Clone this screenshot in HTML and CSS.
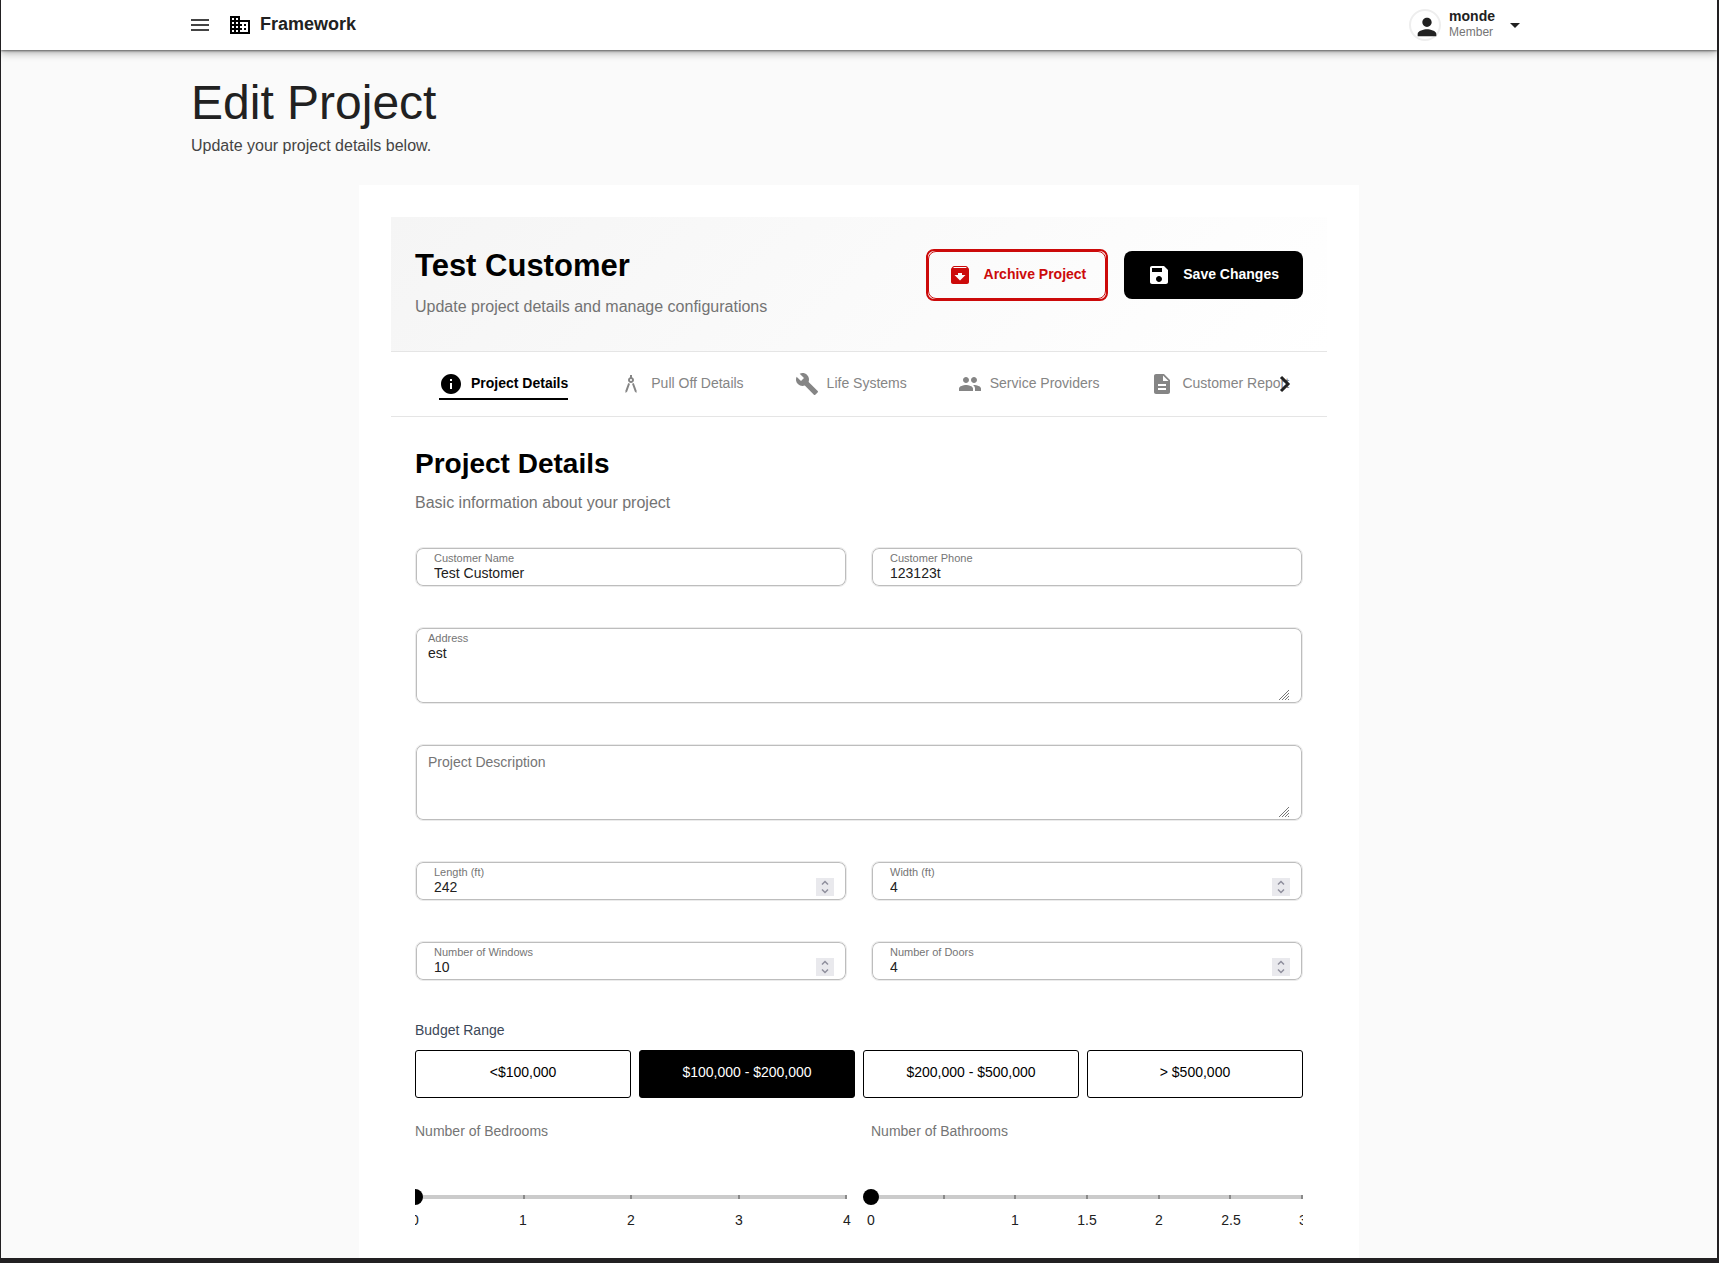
FILE: index.html
```html
<!DOCTYPE html>
<html lang="en">
<head>
  <meta charset="utf-8">
  <meta name="viewport" content="width=device-width, initial-scale=1">
  <title>Edit Project - Framework</title>
  <link rel="stylesheet" href="styles.css">
</head>
<body>
  <header class="topbar">
    <div class="topbar-inner">
      <button class="icon-button menu-button" type="button" aria-label="Menu">
        <svg class="icon" viewBox="0 0 24 24"><path d="M3 18h18v-2H3v2zm0-5h18v-2H3v2zm0-7v2h18V6H3z"/></svg>
      </button>
      <a class="brand" href="#">
        <svg class="icon brand-icon" viewBox="0 0 24 24"><path d="M12 7V3H2v18h20V7H12zM6 19H4v-2h2v2zm0-4H4v-2h2v2zm0-4H4V9h2v2zm0-4H4V5h2v2zm4 12H8v-2h2v2zm0-4H8v-2h2v2zm0-4H8V9h2v2zm0-4H8V5h2v2zm10 12h-8v-2h2v-2h-2v-2h2v-2h-2V9h8v10zm-2-8h-2v2h2v-2zm0 4h-2v2h2v-2z"/></svg>
        <span class="icon-label">Framework</span>
      </a>
      <button class="account" type="button">
        <span class="avatar">
          <svg class="avatar-icon" viewBox="0 0 24 24"><path d="M12 12c2.21 0 4-1.79 4-4s-1.79-4-4-4-4 1.79-4 4 1.79 4 4 4zm0 2c-2.67 0-8 1.34-8 4v2h16v-2c0-2.66-5.33-4-8-4z"/></svg>
        </span>
        <span class="account-text">
          <span class="account-name">monde</span>
          <span class="account-role">Member</span>
        </span>
        <svg class="icon" viewBox="0 0 24 24"><path d="M7 10l5 5 5-5z"/></svg>
      </button>
    </div>
  </header>

  <main class="page">
    <h1 class="page-title">Edit Project</h1>
    <p class="page-subtitle">Update your project details below.</p>

    <div class="card">
      <div class="project-header">
        <div>
          <h2 class="project-name">Test Customer</h2>
          <p class="project-note">Update project details and manage configurations</p>
        </div>
        <div class="actions">
          <button class="button button-archive" type="button">
            <svg class="icon" viewBox="0 0 24 24"><path d="M20.54 5.23l-1.39-1.68C18.88 3.21 18.47 3 18 3H6c-.47 0-.88.21-1.16.55L3.46 5.23C3.17 5.57 3 6.02 3 6.5V19c0 1.1.9 2 2 2h14c1.1 0 2-.9 2-2V6.5c0-.48-.17-.93-.46-1.27zM12 17.5L6.5 12H10v-2h4v2h3.5L12 17.5zM5.12 5l.81-1h12l.94 1H5.12z"/></svg>
            <span class="icon-label">Archive Project</span>
          </button>
          <button class="button button-save" type="button">
            <svg class="icon" viewBox="0 0 24 24"><path d="M17 3H5c-1.11 0-2 .9-2 2v14c0 1.1.89 2 2 2h14c1.1 0 2-.9 2-2V7l-4-4zm-5 16c-1.66 0-3-1.34-3-3s1.34-3 3-3 3 1.34 3 3-1.34 3-3 3zm3-10H5V5h10v4z"/></svg>
            <span class="icon-label">Save Changes</span>
          </button>
        </div>
      </div>

      <nav class="tabs" aria-label="Project sections">
        <div class="tab-list" role="tablist">
          <button class="tab tab-active" type="button" role="tab" aria-selected="true">
            <svg class="icon" viewBox="0 0 24 24"><path d="M12 2C6.48 2 2 6.48 2 12s4.48 10 10 10 10-4.48 10-10S17.52 2 12 2zm1 15h-2v-6h2v6zm0-8h-2V7h2v2z"/></svg>
            <span class="icon-label">Project Details</span>
          </button>
          <button class="tab" type="button" role="tab" aria-selected="false">
            <svg class="icon" viewBox="0 0 24 24"><path d="M6.36 18.78 6.61 21l1.62-1.54 2.77-7.6c-.68-.17-1.28-.51-1.77-.98l-2.87 7.9zM14.77 10.88c-.49.47-1.1.81-1.77.98l2.77 7.6L17.39 21l.26-2.22-2.88-7.9zM15 8c0-1.3-.84-2.4-2-2.82V3h-2v2.18C9.84 5.6 9 6.7 9 8c0 1.66 1.34 3 3 3s3-1.34 3-3zm-3 1c-.55 0-1-.45-1-1s.45-1 1-1 1 .45 1 1-.45 1-1 1z"/></svg>
            <span class="icon-label">Pull Off Details</span>
          </button>
          <button class="tab" type="button" role="tab" aria-selected="false">
            <svg class="icon" viewBox="0 0 24 24"><path d="M22.7 19l-9.1-9.1c.9-2.3.4-5-1.5-6.9-2-2-5-2.4-7.4-1.3L9 6 6 9 1.6 4.7C.4 7.1.9 10.1 2.9 12.1c1.9 1.9 4.6 2.4 6.9 1.5l9.1 9.1c.4.4 1 .4 1.4 0l2.3-2.3c.5-.4.5-1.1.1-1.4z"/></svg>
            <span class="icon-label">Life Systems</span>
          </button>
          <button class="tab" type="button" role="tab" aria-selected="false">
            <svg class="icon" viewBox="0 0 24 24"><path d="M16 11c1.66 0 2.99-1.34 2.99-3S17.66 5 16 5c-1.66 0-3 1.34-3 3s1.34 3 3 3zm-8 0c1.66 0 2.99-1.34 2.99-3S9.66 5 8 5C6.34 5 5 6.34 5 8s1.34 3 3 3zm0 2c-2.33 0-7 1.17-7 3.5V19h14v-2.5c0-2.33-4.67-3.5-7-3.5zm8 0c-.29 0-.62.02-.97.05 1.16.84 1.97 1.97 1.97 3.45V19h6v-2.5c0-2.33-4.67-3.5-7-3.5z"/></svg>
            <span class="icon-label">Service Providers</span>
          </button>
          <button class="tab" type="button" role="tab" aria-selected="false">
            <svg class="icon" viewBox="0 0 24 24"><path d="M14 2H6c-1.1 0-1.99.9-1.99 2L4 20c0 1.1.89 2 1.99 2H18c1.1 0 2-.9 2-2V8l-6-6zm2 16H8v-2h8v2zm0-4H8v-2h8v2zm-3-5V3.5L18.5 9H13z"/></svg>
            <span class="icon-label">Customer Report</span>
          </button>
        </div>
        <button class="tabs-next" type="button" aria-label="More tabs">
          <svg width="12" height="18" viewBox="0 0 12 18"><path d="M2 2l7 7-7 7" fill="none" stroke="#212121" stroke-width="3"/></svg>
        </button>
      </nav>

      <form class="details">
        <h2 class="section-title">Project Details</h2>
        <p class="section-note">Basic information about your project</p>

        <div class="fields">
          <div class="field">
            <label for="customer-name">Customer Name</label>
            <input id="customer-name" type="text" value="Test Customer">
          </div>
          <div class="field">
            <label for="customer-phone">Customer Phone</label>
            <input id="customer-phone" type="text" value="123123t">
          </div>
          <div class="field field-area">
            <label for="address">Address</label>
            <textarea id="address" rows="3">est</textarea>
            <svg class="grip" viewBox="0 0 10 10"><path d="M0 10L10 0M3 10L10 3M6 10L10 6M9 10L10 9"/></svg>
          </div>
          <div class="field field-area field-empty">
            <label for="description">Project Description</label>
            <textarea id="description" rows="2"></textarea>
            <svg class="grip" viewBox="0 0 10 10"><path d="M0 10L10 0M3 10L10 3M6 10L10 6M9 10L10 9"/></svg>
          </div>
          <div class="field">
            <label for="length">Length (ft)</label>
            <div class="number">
              <input id="length" type="number" value="242">
              <svg class="spinner" viewBox="0 0 18 18"><path d="M6 6.5l3-3 3 3M6 11.5l3 3 3-3"/></svg>
            </div>
          </div>
          <div class="field">
            <label for="width">Width (ft)</label>
            <div class="number">
              <input id="width" type="number" value="4">
              <svg class="spinner" viewBox="0 0 18 18"><path d="M6 6.5l3-3 3 3M6 11.5l3 3 3-3"/></svg>
            </div>
          </div>
          <div class="field">
            <label for="windows">Number of Windows</label>
            <div class="number">
              <input id="windows" type="number" value="10">
              <svg class="spinner" viewBox="0 0 18 18"><path d="M6 6.5l3-3 3 3M6 11.5l3 3 3-3"/></svg>
            </div>
          </div>
          <div class="field">
            <label for="doors">Number of Doors</label>
            <div class="number">
              <input id="doors" type="number" value="4">
              <svg class="spinner" viewBox="0 0 18 18"><path d="M6 6.5l3-3 3 3M6 11.5l3 3 3-3"/></svg>
            </div>
          </div>
        </div>

        <div class="budget-label" id="budget-label">Budget Range</div>
        <div class="budget" role="group" aria-labelledby="budget-label">
          <button class="budget-option" type="button">&lt;$100,000</button>
          <button class="budget-option budget-selected" type="button" aria-pressed="true">$100,000 - $200,000</button>
          <button class="budget-option" type="button">$200,000 - $500,000</button>
          <button class="budget-option" type="button">&gt; $500,000</button>
        </div>

        <div class="sliders">
          <div class="slider">
            <label for="bedrooms">Number of Bedrooms</label>
            <div class="slider-rail">
              <div class="ticks"><i></i><i></i><i></i><i></i><i></i></div>
              <input id="bedrooms" type="range" min="0" max="4" step="1" value="0">
            </div>
            <div class="marks"><span>0</span><span>1</span><span>2</span><span>3</span><span>4</span></div>
          </div>
          <div class="slider">
            <label for="bathrooms">Number of Bathrooms</label>
            <div class="slider-rail">
              <div class="ticks"><i></i><i></i><i></i><i></i><i></i><i></i><i></i></div>
              <input id="bathrooms" type="range" min="0" max="3" step="0.5" value="0">
            </div>
            <div class="marks"><span>0</span><span></span><span>1</span><span>1.5</span><span>2</span><span>2.5</span><span>3</span></div>
          </div>
        </div>
      </form>
    </div>
  </main>
</body>
</html>
```
FILE: styles.css
```css
* {
  box-sizing: border-box;
}

body {
  display: flex;
  flex-direction: column;
  min-height: 100vh;
  margin: 0;
  border: solid #222022;
  border-width: 0 2px 5px 1px;
  background: #fafafa;
  color: #212121;
  font: 14px/18px "Liberation Sans", Arial, Helvetica, sans-serif;
}

h1, h2, p {
  margin: 0;
}

button, input, textarea {
  margin: 0;
  padding: 0;
  border: 0;
  background: none;
  color: inherit;
  font: inherit;
}

button {
  cursor: pointer;
}

svg {
  display: block;
  flex: none;
}

.icon {
  width: 24px;
  height: 24px;
  fill: currentColor;
}

/* Text beside an icon sits slightly above its centre line */
.icon-label {
  padding-bottom: 2px;
}

/* Top bar */

.topbar {
  position: relative;
  background: #fff;
  box-shadow: 0 1px 2px rgba(0, 0, 0, 0.5), 0 3px 8px rgba(0, 0, 0, 0.3);
}

.topbar-inner {
  display: flex;
  align-items: center;
  width: 100%;
  max-width: 1336px;
  height: 50px;
  margin: 0 auto;
}

.menu-button {
  margin: 0 16px 0 -3px;
  color: #444;
}

.brand {
  display: flex;
  align-items: center;
  gap: 8px;
  color: #212121;
  font-size: 18px;
  font-weight: 700;
  text-decoration: none;
}

.brand-icon {
  color: #000;
}

.account {
  display: flex;
  align-items: center;
  gap: 8px;
  margin-left: auto;
  text-align: left;
}

.avatar {
  width: 32px;
  height: 32px;
  padding: 2px 0 0 2px;
  border: 2px solid #eee;
  border-radius: 50%;
}

.avatar-icon {
  width: 28px;
  height: 28px;
  fill: #212121;
}

.account-text {
  display: flex;
  flex-direction: column;
  padding-bottom: 2px;
  line-height: 16px;
}

.account-name {
  font-weight: 700;
}

.account-role {
  color: #757575;
  font-size: 12px;
}

/* Page */

.page {
  display: flex;
  flex: 1;
  flex-direction: column;
  width: 100%;
  max-width: 1336px;
  margin: 0 auto;
  padding-top: 25px;
}

.page-title {
  margin-bottom: 3px;
  font-size: 48px;
  font-weight: 400;
  line-height: 56px;
}

.page-subtitle {
  margin-bottom: 27px;
  color: #444;
  font-size: 16px;
  line-height: 24px;
}

.card {
  flex: 1;
  width: 100%;
  max-width: 1000px;
  margin: 0 auto;
  padding: 32px 32px 0;
  background: #fff;
}

.project-header {
  display: flex;
  align-items: flex-start;
  justify-content: space-between;
  padding: 32px 24px;
  border-bottom: 1px solid #e5e5e5;
  background: linear-gradient(135deg, #f5f5f5, #fff);
}

.project-name {
  margin-bottom: 12px;
  color: #000;
  font-size: 31px;
  line-height: 34px;
}

.project-note,
.section-note {
  color: #737373;
  font-size: 16px;
  line-height: 24px;
}

.actions {
  display: flex;
  align-items: center;
  gap: 16px;
}

.button {
  position: relative;
  display: flex;
  align-items: center;
  gap: 12px;
  height: 48px;
  padding: 0 24px 0 23px;
  border-radius: 8px;
  font-weight: 700;
}

.button-archive {
  height: 52px;
  padding: 0 20px;
  border: 2px solid #cc0a0a;
  color: #cc0a0a;
}

.button-archive::after {
  position: absolute;
  inset: 0;
  border: 1px solid #cc0a0a;
  border-radius: 8px;
  content: "";
}

.button-save {
  background: #000;
  color: #fff;
}

/* Tabs */

.tabs {
  position: relative;
  padding: 20px 36px 16px 48px;
  border-bottom: 1px solid #e5e5e5;
}

.tab-list {
  display: flex;
  gap: 51px;
  overflow: hidden;
}

.tab {
  display: flex;
  flex: none;
  align-items: center;
  gap: 8px;
  padding-bottom: 2px;
  border-bottom: 2px solid transparent;
  color: #858585;
}

.tab-active {
  border-color: #000;
  color: #000;
  font-weight: 700;
}

.tabs-next {
  position: absolute;
  top: 23px;
  right: 36px;
}

/* Form */

.details {
  padding: 32px 24px 24px;
}

.section-title {
  margin-bottom: 12px;
  color: #000;
  font-size: 28px;
  line-height: 30px;
}

.section-note {
  margin-bottom: 32px;
}

.fields {
  display: grid;
  grid-template-columns: 1fr 1fr;
  gap: 40px 24px;
  margin-bottom: 40px;
}

.field {
  position: relative;
  display: flex;
  flex-direction: column;
  padding: 4px 12px 4px 18px;
  border: 1px solid #ebebeb;
  border-radius: 8px;
  box-shadow: inset 0 0 0 1px #bdbdbd;
}

.field label {
  color: #757575;
  font-size: 11px;
  line-height: 12px;
}

.field input {
  width: 100%;
  height: 18px;
  outline: 0;
}

.field input[type="number"] {
  appearance: textfield;
}

.field-area {
  grid-column: 1 / -1;
  padding: 4px 12px 5px;
}

.field-area textarea {
  height: 54px;
  outline: 0;
  resize: none;
}

.field-empty {
  padding-top: 8px;
}

.field-empty label {
  font-size: 14px;
  line-height: 18px;
}

.field-empty textarea {
  height: 44px;
}

.grip {
  position: absolute;
  right: 13px;
  bottom: 3px;
  width: 10px;
  height: 10px;
  stroke: #777;
}

.number {
  display: flex;
}

.spinner {
  width: 18px;
  height: 18px;
  background: #e9e9ed;
  fill: none;
  stroke: #8f8f9d;
  stroke-width: 1.5;
}

.budget-label {
  margin-bottom: 11px;
  color: #3c4858;
}

.budget {
  display: grid;
  grid-template-columns: repeat(4, 1fr);
  gap: 8px;
  margin-bottom: 24px;
}

.budget-option {
  height: 48px;
  padding-bottom: 4px;
  border: 1px solid #000;
  border-radius: 3px;
  color: #000;
}

.budget-selected {
  background: #000;
  color: #fff;
}

/* Sliders */

.sliders {
  display: grid;
  grid-template-columns: 1fr 1fr;
  gap: 24px;
  overflow: hidden;
}

.slider label {
  color: #757575;
}

.slider-rail {
  display: grid;
  align-items: center;
  margin: 49px 0 6px;
}

.ticks,
.slider-rail input {
  grid-area: 1 / 1;
}

.ticks {
  display: flex;
  justify-content: space-between;
  background: #cbcbcb;
}

.ticks i {
  width: 2px;
  height: 4px;
  background: #8a8a8a;
}

.slider-rail input {
  width: calc(100% + 16px);
  height: 16px;
  margin: 0 -8px;
  appearance: none;
}

.slider-rail input::-webkit-slider-thumb {
  width: 16px;
  height: 16px;
  border-radius: 50%;
  background: #000;
  appearance: none;
}

.marks {
  display: flex;
  justify-content: space-between;
}

.marks span {
  display: flex;
  justify-content: center;
  width: 0;
}
```
